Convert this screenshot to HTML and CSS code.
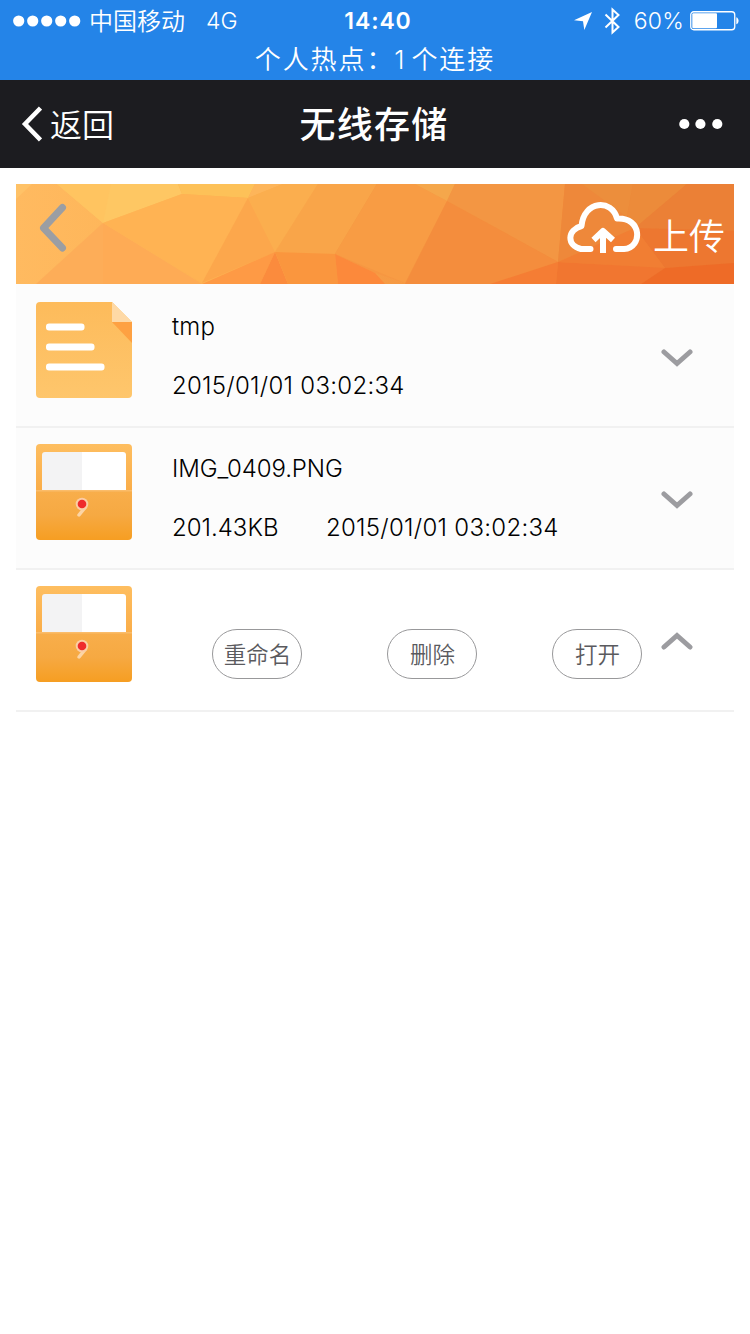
FILE: index.html
```
<!DOCTYPE html>
<html lang="zh-CN">
<head>
<meta charset="utf-8">
<title>无线存储</title>
<link rel="stylesheet" href="styles.css">
</head>
<body>
<header class="status">
  <div class="status-row">
    <div class="status-left">
      <svg class="signal" width="68" height="12" viewBox="0 0 68 12"><circle cx="5.7" cy="6" r="5.6"/><circle cx="19.7" cy="6" r="5.6"/><circle cx="33.7" cy="6" r="5.6"/><circle cx="47.7" cy="6" r="5.6"/><circle cx="61.7" cy="6" r="5.6"/></svg>
      <span class="carrier">中国移动</span>
      <span class="network">4G</span>
    </div>
    <span class="time">14:40</span>
    <div class="status-right">
      <svg class="location" width="20" height="20" viewBox="0 0 20 20"><path d="M19 1 1 9.3 10 10.2 11.3 19Z"/></svg>
      <svg class="bluetooth" width="17" height="28" viewBox="0 0 17 28"><path d="M1.5 7.5 14.5 20 8.5 25.500V2.500L14.500 8 1.500 20.500"/></svg>
      <span class="percent">60%</span>
      <svg class="battery" width="49" height="20" viewBox="0 0 49 20"><rect class="shell" x=".75" y=".75" width="44" height="18" rx="3"/><rect x="2.3" y="2.3" width="24.7" height="15" rx="1"/><path d="M46.300 6.300c3 1 3 6 0 7Z"/></svg>
    </div>
  </div>
  <div class="hotspot"><span>个人热点：</span><span class="count">1</span><span>个连接</span></div>
</header>
<nav class="nav">
  <a class="back"><svg width="22" height="38" viewBox="0 0 22 38"><path d="M20.500 3 5 19 20.500 35"/></svg><span>返回</span></a>
  <h1 class="title">无线存储</h1>
  <svg class="more" width="44" height="12" viewBox="0 0 44 12"><circle cx="5.3" cy="6" r="5.1"/><circle cx="21.4" cy="6" r="5.1"/><circle cx="38.3" cy="6" r="5.1"/></svg>
</nav>
<main class="content">
  <section class="banner">
    <svg class="facets" width="718" height="100" viewBox="0 0 718 100">
      <defs>
        <linearGradient id="base"><stop offset="0" stop-color="#ffba60"/><stop offset=".3" stop-color="#fdb152"/><stop offset=".5" stop-color="#f69c45"/><stop offset=".75" stop-color="#f28b3b"/><stop offset="1" stop-color="#e97730"/></linearGradient>
      </defs>
      <path fill="url(#base)" d="M0 0H718V100H0Z"/>
      <path fill="#ffc267" d="M0 0H16L0 15Z"/>
      <path fill="#fec763" d="M41 0H162L166 10 87 39Z"/>
      <path fill="#ffc460" d="M41 0H95L87 39Z"/>
      <path fill="#fdc158" d="M162 0H239L232 14 166 10Z"/>
      <path fill="#fdb55a" d="M239 0H267L232 14Z"/>
      <path fill="#fdad58" d="M87 39 20 100H87Z"/>
      <path fill="#feab55" d="M87 39 186 100H87Z"/>
      <path fill="#ffb353" d="M87 39 166 10 232 14 186 99Z"/>
      <path fill="#fca74c" d="M232 14 259 68 186 99Z"/>
      <path fill="#fbae4e" d="M232 14 267 0H302L259 68Z"/>
      <path fill="#f9a549" d="M302 0H361L319 70 259 68Z"/>
      <path fill="#f69742" d="M361 0H399L431 17 389 99 359 89 319 70Z"/>
      <path fill="#f89d46" d="M399 0 431 17 389 99 319 70 361 0Z" opacity=".75"/>
      <path fill="#f5a74b" d="M399 0H439L431 17Z"/>
      <path fill="#f39643" d="M439 0H549L542 78 431 17Z"/>
      <path fill="#f48d3d" d="M431 17 542 78 474 100H389Z"/>
      <path fill="#fe9a45" d="M259 68 186 100H244Z"/>
      <path fill="#fb8b3d" d="M259 68 244 100H272Z"/>
      <path fill="#fa963e" d="M259 68 319 70 322 100H272Z"/>
      <path fill="#fc893b" d="M319 70 359 89 369 100H322Z"/>
      <path fill="#f57d34" d="M474 100 542 78 540 100Z"/>
      <path fill="#ee883a" d="M549 0H671L619 44 542 78Z"/>
      <path fill="#ec8e3c" d="M566 0H617L611 33Z"/>
      <path fill="#ec8b3a" d="M617 0H671L619 44 611 33Z"/>
      <path fill="#eb8036" d="M671 0H718V47L619 44Z"/>
      <path fill="#ed7730" d="M619 44 718 47V79L649 84Z"/>
      <path fill="#f17e33" d="M619 44 649 84 542 78Z"/>
      <path fill="#f17630" d="M542 78 649 84 625 100H540Z"/>
      <path fill="#ee6b27" d="M649 84 718 79V100H625Z"/>
    </svg>
    <svg class="banner-back" width="28" height="50" viewBox="0 0 28 50"><path d="M23.500 4.500 4.500 25 23.500 45"/></svg>
    <div class="upload">
      <svg class="cloud" width="74" height="52" viewBox="0 0 74 52"><path d="M23.500 47H14C-.5 43.500 0 28 14.500 24 17-2 45-3 50 16.500 75 15 76 45.500 57 47H49"/><path class="arrow" d="M36 51V30M26.500 38 36 29 46 38"/></svg>
      <span>上传</span>
    </div>
  </section>
  <ul class="files">
    <li class="file">
      <svg class="thumb" width="96" height="96" viewBox="0 0 96 96">
        <defs><linearGradient id="doc" x2="0" y2="1"><stop stop-color="#fdbb5b"/><stop offset="1" stop-color="#fec66c"/></linearGradient></defs>
        <path fill="url(#doc)" d="M4 0H76L96 20V92Q96 96 92 96H4Q0 96 0 92V4Q0 0 4 0Z"/>
        <path fill="#fed9a6" d="M76 0 96 20H76Z"/><path fill="#fea142" d="M76 20H96V41Z"/>
        <g fill="#fff"><rect x="10" y="21.500" width="38.500" height="7" rx="3"/><rect x="10" y="41.500" width="48.500" height="7" rx="3"/><rect x="10" y="61.500" width="58.500" height="7" rx="3"/></g>
      </svg>
      <div class="info"><span class="name n1">tmp</span><div class="meta"><span class="date">2015/01/01 03:02:34</span></div></div>
      <svg class="chevron" width="32" height="19" viewBox="0 0 32 19"><path d="M3 3 16 14.500 29 3"/></svg>
    </li>
    <li class="file">
      <svg class="thumb" width="96" height="96" viewBox="0 0 96 96">
        <defs>
          <linearGradient id="top" x2="0" y2="1"><stop stop-color="#febe60"/><stop offset="1" stop-color="#faad48"/></linearGradient>
          <linearGradient id="bottom" x2="0" y2="1"><stop stop-color="#f8ae4b"/><stop offset=".5" stop-color="#f6a942"/><stop offset="1" stop-color="#f69e22"/></linearGradient>
          <g id="folder">
            <path fill="url(#top)" d="M4 0H92Q96 0 96 4V47H0V4Q0 0 4 0Z"/>
            <path fill="url(#bottom)" d="M0 47H96V92Q96 96 92 96H4Q0 96 0 92Z"/>
            <path fill="#f3f3f4" d="M9 8H46V46H6V11Q6 8 9 8Z"/><path fill="#fff" d="M46 8H87Q90 8 90 11V46H46Z"/>
            <path fill="#fdd39c" d="M0 46H96V47.500H0Z" opacity=".4"/>
            <path fill="none" stroke="#fcd5a5" stroke-width="3.500" stroke-linecap="round" d="M49.500 63 43 71"/>
            <circle cx="46" cy="60" r="6.300" fill="#fbcda4"/><circle cx="46" cy="60" r="4.300" fill="#ef2a2c"/>
          </g>
        </defs>
        <use href="#folder"/>
      </svg>
      <div class="info"><span class="name n2">IMG_0409.PNG</span><div class="meta"><span class="size">201.43KB</span><span class="date">2015/01/01 03:02:34</span></div></div>
      <svg class="chevron" width="32" height="19" viewBox="0 0 32 19"><path d="M3 3 16 14.500 29 3"/></svg>
    </li>
    <li class="file open">
      <svg class="thumb" width="96" height="96" viewBox="0 0 96 96"><use href="#folder"/></svg>
      <div class="actions"><button class="pill rename">重命名</button><button class="pill delete">删除</button><button class="pill">打开</button></div>
      <svg class="chevron" width="32" height="19" viewBox="0 0 32 19"><path d="M3 16 16 4.500 29 16"/></svg>
    </li>
  </ul>
</main>
</body>
</html>
```
FILE: styles.css
```
* { box-sizing: border-box; }
body {
  margin: 0;
  background: #fff;
  color: #000;
  font-family: Inter, "Noto Sans CJK SC", sans-serif;
}
svg { display: block; flex: none; }
.status {
  height: 80px;
  background: #2484e8;
  color: #fff;
  fill: #fff;
  font-size: 24px;
  font-weight: 350;
  white-space: nowrap;
}
.status-row {
  display: grid;
  grid-template-columns: 1fr auto 1fr;
  align-items: center;
  height: 41px;
  padding: 0 11px 0 13px;
}
.status-left, .status-right { display: flex; align-items: center; }
.status-left { height: 41px; line-height: 41px; }
.carrier { margin-left: 8px; padding-top: 1px; }
.network { margin-left: 21px; padding-top: 1px; font-size: 23px; }
.time { padding-left: 4px; font-size: 23px; font-weight: 600; letter-spacing: .9px; }
.status-right { justify-content: flex-end; }
.bluetooth { margin: 0 13px 0 11px; fill: none; stroke: #fff; stroke-width: 2; }
.percent { font-size: 23px; margin-right: 6px; letter-spacing: .2px; }
.shell { fill: none; stroke: #fff; stroke-width: 1.3; }
.hotspot {
  display: flex;
  justify-content: center;
  height: 38px;
  line-height: 38px;
  font-size: 26px;
  letter-spacing: 1.9px;
}
.count { margin-right: 5px; }
.nav {
  display: grid;
  grid-template-columns: 1fr auto 1fr;
  align-items: center;
  height: 88px;
  padding: 0 27px 0 20px;
  background: #1c1c20;
  color: #fff;
}
.back { display: flex; align-items: center; gap: 8px; font-size: 32px; font-weight: 350; line-height: 84px; }
.back span { padding-top: 4px; }
.back svg { fill: none; stroke: #fff; stroke-width: 4.5; }
.title { margin: 0; padding: 2px 0 0 5px; font-size: 36px; font-weight: 500; line-height: 86px; letter-spacing: 1.2px; }
.more { justify-self: end; fill: #fff; }
.content { padding: 16px; }
.banner { display: grid; height: 100px; }
.banner > * { grid-area: 1 / 1; }
.banner-back { margin: 19px 0 0 23px; fill: none; stroke: #9b9ea3; stroke-width: 7; stroke-linecap: round; stroke-linejoin: round; }
.upload { display: flex; justify-self: end; margin-right: 9px; color: #fff; font-size: 36px; font-weight: 350; line-height: 107px; }
.cloud { margin: 18px 12px 0 0; fill: none; stroke: #fff; stroke-width: 6; stroke-linecap: round; stroke-linejoin: round; }
.arrow { stroke-linecap: butt; }
.files { margin: 0; padding: 0; list-style: none; }
.file {
  display: flex;
  height: 142px;
  padding: 16px 41px 0 20px;
  background: #fcfcfc;
  border-bottom: 2px solid #f1f1f1;
}
.file:first-child { height: 144px; padding-top: 18px; }
.open { background: #fff; }
.info { flex: 1; margin: 10px 0 0 40px; font-size: 24px; font-weight: 350; line-height: 30px; }
.name { display: block; }
.n1 { letter-spacing: .2px; }
.n2 { letter-spacing: -.1px; }
.size { width: 106px; }
.date { letter-spacing: .28px; }
.meta { display: flex; gap: 48px; margin-top: 29px; white-space: nowrap; }
.chevron { margin-top: 47px; fill: none; stroke: #9c9ca0; stroke-width: 5; stroke-linecap: round; }
.open .chevron { margin-top: 45px; margin-left: 19px; }
.actions { display: flex; flex: 1; margin: 43px 0 0 80px; }
.pill {
  width: 90px;
  height: 50px;
  padding: 1px 0 0 1px;
  border: 1px solid #98989a;
  border-radius: 25px;
  background: #fff;
  color: #5a5a5e;
  font: 350 22.500px/46px Inter, "Noto Sans CJK SC", sans-serif;
  white-space: nowrap;
}
.rename { margin-right: 85px; }
.delete { margin-right: 75px; }
```
